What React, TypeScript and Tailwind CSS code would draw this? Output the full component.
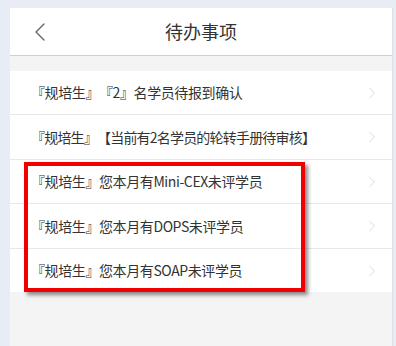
import { ChevronLeft, ChevronRight } from "lucide-react";

const items = [
  { t: "『规培生』『2』名学员待报到确认", h: "h-[44px]", tr: "tracking-[-0.4px]" },
  { t: "『规培生』【当前有2名学员的轮转手册待审核】", h: "h-[45px]", tr: "tracking-[-0.8px]" },
  { t: "『规培生』您本月有Mini-CEX未评学员", h: "h-[44px]", tr: "tracking-[-0.4px]" },
  { t: "『规培生』您本月有DOPS未评学员", h: "h-[45px]", tr: "tracking-[-0.4px]" },
  { t: "『规培生』您本月有SOAP未评学员", h: "h-[43px]", tr: "tracking-[-0.4px]" },
];

export default function App() {
  return (
    <div
      className="h-[346px] w-[396px] overflow-hidden bg-[#e8edf5] pl-[10px] pr-[3px] pt-[8px] [text-spacing-trim:space-all]"
      style={{ fontFamily: '"Noto Sans CJK SC", "Noto Sans", sans-serif' }}
    >
      <div className="relative flex h-full flex-col border-r border-[#dcdfe4] bg-[#f4f4f4]">
        <div className="flex h-[48px] items-center border-b border-[#cfcfcf] bg-white">
          <ChevronLeft className="ml-[14px] h-8 w-8 text-[#666]" strokeWidth={1} />
          <h1 className="flex-1 pr-[46px] text-center text-[18px] text-[#333]">待办事项</h1>
        </div>
        <ul className="mt-[15px] bg-white">
          {items.map((it, i) => (
            <li
              key={i}
              className={`flex ${it.h} items-center border-b border-[#e8e8e8] pl-[21px] pr-[10px] text-[14px] text-[#333] last:border-b-0`}
            >
              <span className={`flex-1 ${it.tr}`}>{it.t}</span>
              <ChevronRight className="h-5 w-5 text-[#d4d4d4]" strokeWidth={1} />
            </li>
          ))}
        </ul>
        <div className="absolute left-[14px] top-[154px] h-[130px] w-[281px] border-4 border-[#f00000] shadow-[3px_3px_4px_rgba(0,0,0,0.45)]" />
      </div>
    </div>
  );
}
